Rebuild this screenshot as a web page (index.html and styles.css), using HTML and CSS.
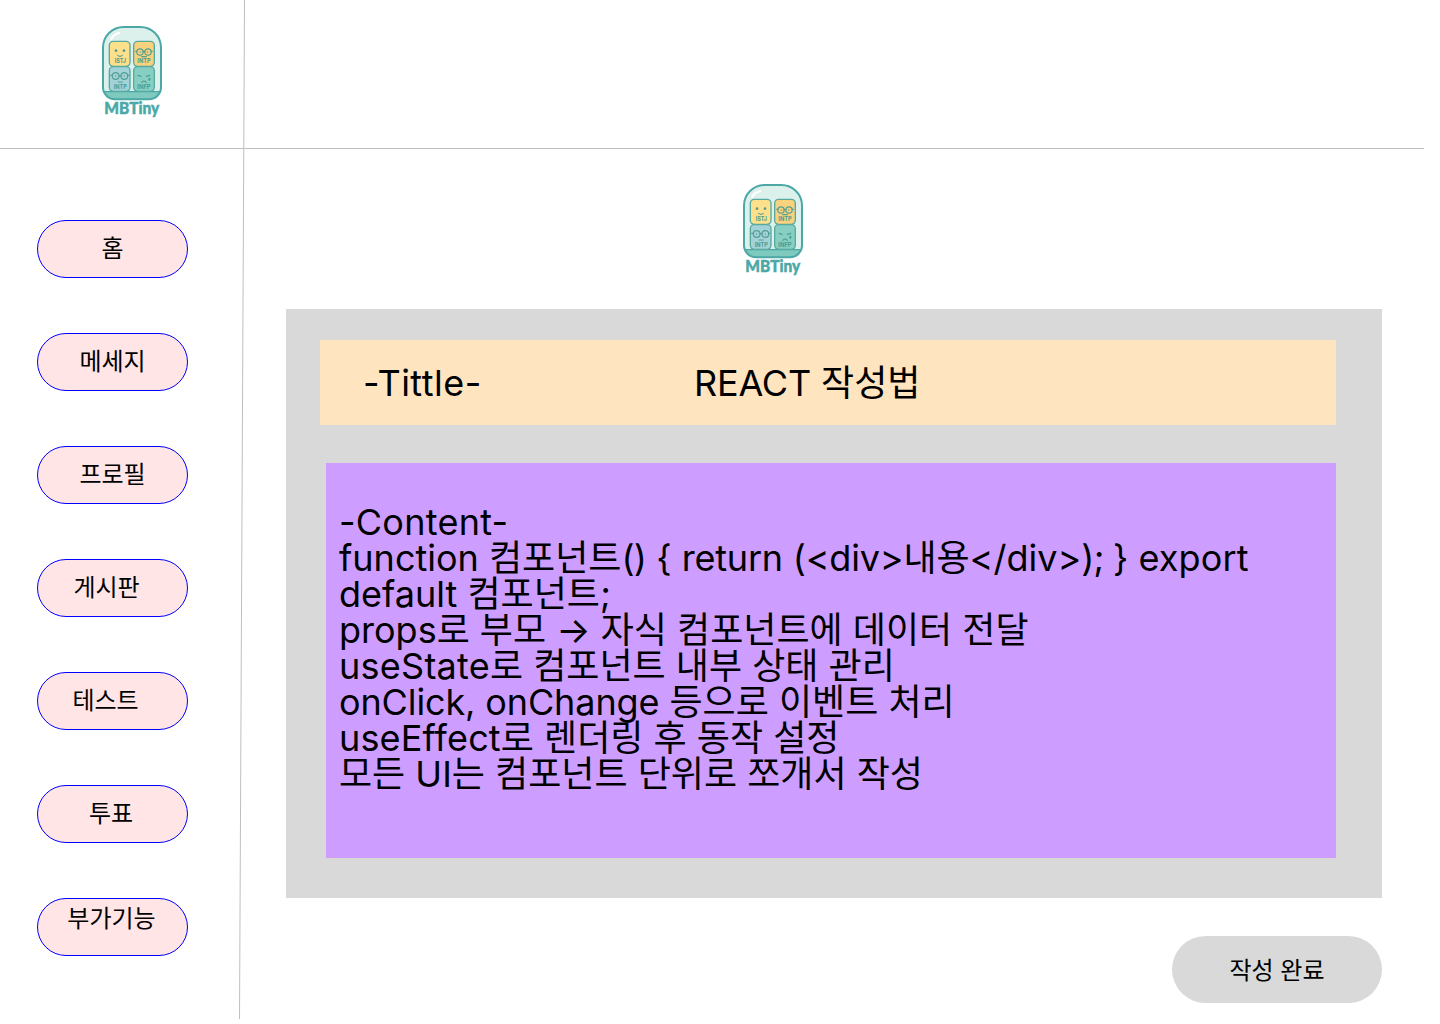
FILE: index.html
```html
<!DOCTYPE html>
<html lang="ko">
<head>
<meta charset="utf-8">
<title>MBTiny</title>
<link rel="stylesheet" href="styles.css">
</head>
<body>
<svg class="defs" width="0" height="0" aria-hidden="true">
  <symbol id="logo" viewBox="0 0 240 330">
    <path d="M33 95A62 62 0 0 1 95 33H145A62 62 0 0 1 207 95V214A36 36 0 0 1 171 250H69A36 36 0 0 1 33 214Z" fill="#dcf1ec"/>
    <path d="M34 227H206A36 36 0 0 1 171 250H69A36 36 0 0 1 34 227Z" fill="#7fcabf"/>
    <path d="M34 227H206" stroke="#4ba8a6" stroke-width="4"/>
    <path d="M58 68Q64 56 81 51" fill="none" stroke="#fff" stroke-width="7" stroke-linecap="round"/>
    <g stroke="#58a9a0" stroke-width="4">
      <rect x="52" y="76" width="62" height="75" rx="12" fill="#fce08b"/>
      <rect x="125" y="76" width="62" height="75" rx="12" fill="#f8d27c"/>
      <rect x="52" y="152" width="62" height="74" rx="12" fill="#a3d3d9"/>
      <rect x="125" y="152" width="62" height="74" rx="12" fill="#86cfc2"/>
    </g>
    <g fill="#5b9a88">
      <circle cx="72" cy="104" r="4"/><circle cx="96" cy="104" r="4"/>
      <circle cx="145" cy="108" r="2"/><circle cx="167" cy="108" r="2"/>
      <circle cx="71" cy="180" r="2"/><circle cx="97" cy="180" r="2"/>
      <path d="M172 184Q179 192 172 195Q166 192 172 184Z" fill="#439a9f"/>
    </g>
    <g fill="none" stroke="#549e93" stroke-width="3.5" stroke-linecap="round">
      <path d="M77 118Q84 124 91 118"/>
      <circle cx="144" cy="108" r="9.5"/><circle cx="168" cy="108" r="9.5"/>
      <path d="M131 106H135M153 107H159M177 106H181M149 122H163"/>
      <circle cx="71" cy="180" r="10"/><circle cx="97" cy="180" r="10"/>
      <path d="M56 178H61M81 179H87M107 178H111M78 198H91"/>
      <path d="M138 178L147 181M163 181L173 178M149 199Q156 192 163 199"/>
    </g>
    <path d="M33 95A62 62 0 0 1 95 33H145A62 62 0 0 1 207 95V214A36 36 0 0 1 171 250H69A36 36 0 0 1 33 214Z" fill="none" stroke="#4ba8a6" stroke-width="6"/>
    <g class="logo-tag">
      <text x="68" y="142" textLength="34" lengthAdjust="spacingAndGlyphs">ISTJ</text>
      <text x="136" y="142" textLength="40" lengthAdjust="spacingAndGlyphs">INTP</text>
      <text x="65" y="219" textLength="40" lengthAdjust="spacingAndGlyphs">INTP</text>
      <text x="136" y="219" textLength="40" lengthAdjust="spacingAndGlyphs">INFP</text>
    </g>
    <text class="logo-name" x="37" y="294" textLength="165" lengthAdjust="spacingAndGlyphs">MBTiny</text>
  </symbol>
</svg>

<div class="page">
  <header class="brand"><svg class="logo"><use href="#logo"/></svg></header>
  <div class="topbar"></div>
  <nav class="menu">
    <a class="menu-item">홈</a>
    <a class="menu-item">메세지</a>
    <a class="menu-item">프로필</a>
    <a class="menu-item shift-board">게시판</a>
    <a class="menu-item shift-test">테스트</a>
    <a class="menu-item shift-vote">투표</a>
    <a class="menu-item shift-extra">부가기능</a>
  </nav>
  <main class="main">
    <svg class="logo main-logo"><use href="#logo"/></svg>
    <section class="panel">
      <div class="title-bar"><span class="title-label">-Tittle-</span><span><span class="snug">REACT</span> 작성법</span></div>
      <div class="content"><span class="loose">-Content-</span><br>function 컴포넌트<span class="tight">()</span> { <span class="snug">return </span><span class="snug">(&lt;div&gt;</span>내용&lt;/div&gt;<span class="tight">); </span>} <span class="wide">export</span><br>default 컴포넌트;<br>props로 부모 → 자식 컴포넌트에 데이터 전달<br><span class="loose">useState</span>로 컴포넌트 내부 상태 관리<br><span class="comma">onClick, onChange</span> 등으로 이벤트 처리<br><span class="wide">useEffect</span>로 렌더링 후 동작 설정<br>모든 UI는 컴포넌트 단위로 쪼개서 작성</div>
    </section>
    <button class="submit">작성 완료</button>
  </main>
</div>
<svg class="rules" width="1440" height="1024" aria-hidden="true">
  <path d="M0 148.5H1424"/>
  <path d="M244.5 0L239.5 1019"/>
</svg>
</body>
</html>
```

FILE: styles.css
```css
* { box-sizing: border-box; }

body {
  margin: 0;
  background: #fff;
  color: #000;
  font-family: Inter, "Noto Sans CJK KR", sans-serif;
}

.defs { position: absolute; }

.page {
  display: grid;
  grid-template-columns: 244px 1fr;
  grid-template-rows: 148px 876px;
  width: 1440px;
  height: 1024px;
  overflow: hidden;
}

.logo {
  display: block;
  width: 80px;
  height: 110px;
}

.brand { padding: 16px 0 0 92px; }

.logo-tag {
  font: 700 17px Inter, sans-serif;
  fill: #4b9c91;
}

.logo-name {
  font: 900 50px Lato, sans-serif;
  fill: #4ba8a8;
  stroke: #4ba8a8;
  stroke-width: 1.5px;
}

.menu {
  display: flex;
  flex-direction: column;
  gap: 55px;
  padding: 72px 0 0 37px;
}

.menu-item {
  display: flex;
  align-items: center;
  justify-content: center;
  width: 151px;
  height: 58px;
  padding-bottom: 1px;
  border: 1px solid #00f;
  border-radius: 29px;
  background: #ffe5e5;
  font-size: 24px;
  line-height: 29px;
}

.shift-board { padding-right: 12px; }
.shift-test { padding-right: 14px; }
.shift-vote { padding-right: 3px; }
.shift-extra { padding: 0 2px 18px 0; }

.main {
  display: flex;
  flex-direction: column;
  align-items: flex-start;
  padding: 26px 58px 0 42px;
}

.main-logo { margin-left: 447px; }

.panel {
  width: 1096px;
  height: 589px;
  margin-top: 25px;
  padding: 31px 46px 40px 34px;
  background: #d9d9d9;
  font-size: 36px;
}

.title-bar {
  display: flex;
  align-items: center;
  height: 85px;
  padding-left: 43px;
  background: #ffe4c0;
  line-height: 44px;
}

.title-label {
  width: 331px;
  letter-spacing: 0.5px;
}

.content {
  height: 395px;
  margin: 38px 0 0 6px;
  padding: 41px 0 0 13px;
  background: #cd9eff;
  line-height: 36px;
  white-space: nowrap;
}

.loose { letter-spacing: 0.25px; }
.wide { letter-spacing: 0.15px; }
.snug { letter-spacing: -0.2px; }
.comma { letter-spacing: -0.12px; }
.tight { letter-spacing: -0.8px; }

.submit {
  align-self: flex-end;
  width: 210px;
  height: 67px;
  margin-top: 38px;
  padding: 2px 0 0;
  border: 0;
  border-radius: 34px;
  background: #d9d9d9;
  color: #000;
  font: 24px/29px Inter, "Noto Sans CJK KR", sans-serif;
}

.rules {
  position: absolute;
  top: 0;
  left: 0;
  pointer-events: none;
  fill: none;
  stroke: #bfbfbf;
  stroke-width: 1;
}
```
